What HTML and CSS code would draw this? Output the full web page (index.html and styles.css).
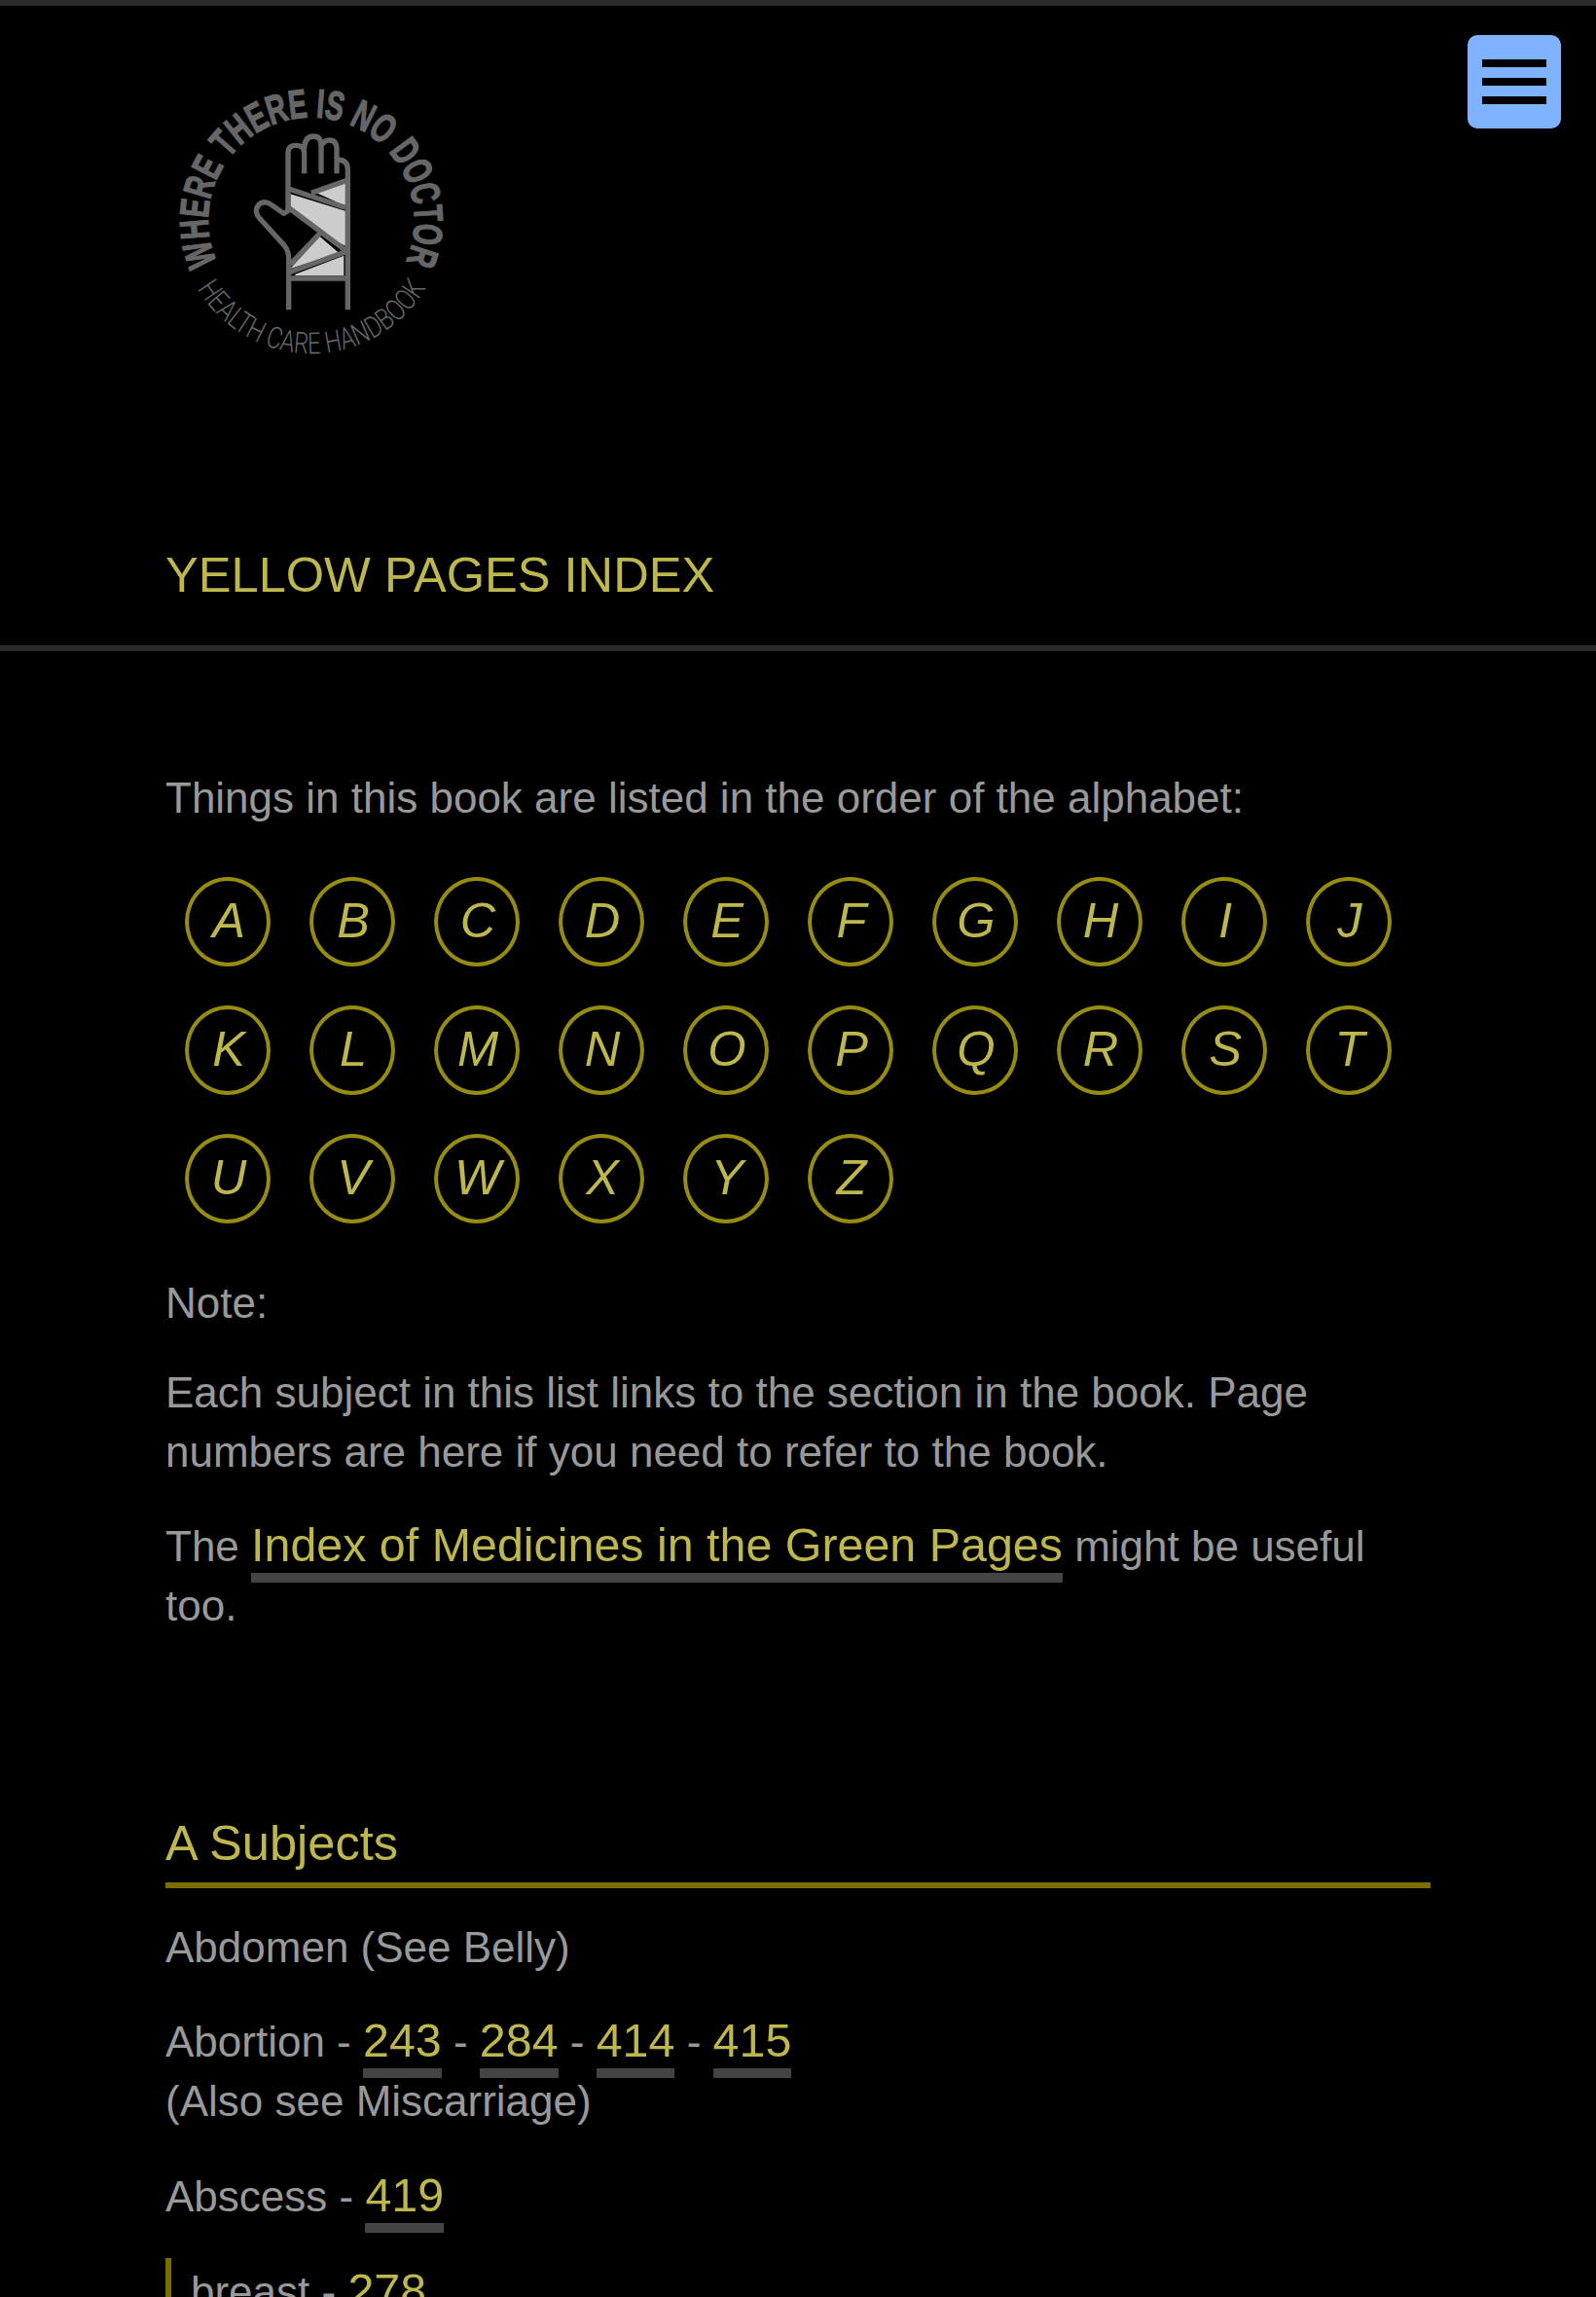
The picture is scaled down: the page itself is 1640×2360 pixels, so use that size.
FILE: index.html
```html
<!DOCTYPE html>
<html lang="en">
<head>
  <meta charset="UTF-8" />
  <title>Yellow Pages Index - Where There Is No Doctor</title>
  <meta name="viewport" content="width=device-width, initial-scale=1.0"/>
  <link rel="stylesheet" href="styles.css">
</head>
<body>
  <header class="site-header">
    <a class="logo" href="#">
      <svg class="logo-img" viewBox="0 0 960 930" role="img" aria-label="Where There Is No Doctor logo">
        <defs>
          <path id="arcTop" d="M 190 600 A 318 318 0 1 1 770 600"></path>
          <path id="arcBottom" d="M 125 675 A 410 410 0 0 0 835 675"></path>
        </defs>
        <text class="logo-title"><textPath href="#arcTop" textLength="1265" lengthAdjust="spacingAndGlyphs">WHERE THERE IS NO DOCTOR</textPath></text>
        <text class="logo-sub"><textPath href="#arcBottom" startOffset="6" textLength="850" lengthAdjust="spacingAndGlyphs">HEALTH CARE HANDBOOK</textPath></text>
        <!-- bandage -->
        <polygon class="band" points="490,382 585,350 585,425"></polygon>
        <polygon class="band" points="415,388 585,440 585,548 500,505 415,432"></polygon>
        <polygon class="band" points="415,618 505,518 565,570"></polygon>
        <polygon class="band" points="430,635 580,578 580,640 430,640"></polygon>
        <!-- hand -->
        <path class="hand" d="M410 745 V590 Q412 565 395 545 L325 468 Q305 448 312 430 Q325 405 352 418 L395 448 L415 435"></path>
        <path class="hand" d="M408 440 V262 Q408 238 432 238 Q458 238 458 262 V325 M458 250 Q458 210 487 210 Q510 210 510 240 V325 M510 240 Q520 222 535 222 Q558 222 558 250 V325 M558 282 Q592 282 592 312 V745"></path>
        <path class="hand" d="M410 372 L585 430 M480 385 L592 345 M412 432 L590 565 M415 628 L590 565 M415 605 L505 510 M410 648 H592"></path>
      </svg>
    </a>
    <button class="menu-btn" aria-label="Menu"><span></span><span></span><span></span></button>
    <h1 class="page-title">YELLOW PAGES INDEX</h1>
  </header>

  <main class="content">
    <p class="intro">Things in this book are listed in the order of the alphabet:</p>

    <nav class="alphabet">
      <a href="#a">A</a><a href="#b">B</a><a href="#c">C</a><a href="#d">D</a><a href="#e">E</a>
      <a href="#f">F</a><a href="#g">G</a><a href="#h">H</a><a href="#i">I</a><a href="#j">J</a>
      <a href="#k">K</a><a href="#l">L</a><a href="#m">M</a><a href="#n">N</a><a href="#o">O</a>
      <a href="#p">P</a><a href="#q">Q</a><a href="#r">R</a><a href="#s">S</a><a href="#t">T</a>
      <a href="#u">U</a><a href="#v">V</a><a href="#w">W</a><a href="#x">X</a><a href="#y">Y</a>
      <a href="#z">Z</a>
    </nav>

    <p>Note:</p>
    <p>Each subject in this list links to the section in the book. Page numbers are here if you need to refer to the book.</p>
    <p>The <a class="link" href="#">Index of Medicines in the Green Pages</a> might be useful too.</p>

    <h2 class="letter-head" id="a">A Subjects</h2>
    <p>Abdomen (See Belly)</p>
    <p>Abortion - <a class="link" href="#">243</a> - <a class="link" href="#">284</a> - <a class="link" href="#">414</a> - <a class="link" href="#">415</a><br>(Also see Miscarriage)</p>
    <p>Abscess - <a class="link" href="#">419</a></p>
    <p class="sub-item">breast - <a class="link" href="#">278</a></p>
  </main>
</body>
</html>
```

FILE: styles.css
```css
* {
  margin: 0;
  padding: 0;
  box-sizing: border-box;
}

html, body {
  height: 100vh;
  overflow: hidden;
}

body {
  font-family: "Liberation Sans", Arial, sans-serif;
  font-size: 44px;
  line-height: 60.5px;
  background: #000;
  color: #999;
  border-top: 6px solid #2a2a2a;
}

.site-header {
  position: relative;
  padding: 64px 170px 37px;
  border-bottom: 6px solid #2a2a2a;
}

.logo {
  display: block;
  width: 320px;
  height: 310px;
  margin-left: -10px;
}

.logo-img {
  display: block;
  width: 320px;
  height: 310px;
}

.logo-title {
  font-family: "Liberation Sans Narrow", "Liberation Sans", sans-serif;
  font-weight: 700;
  font-size: 125px;
  fill: #666;
  stroke: #666;
  stroke-width: 4;
}

.logo-sub {
  font-family: Roboto, "Liberation Sans", sans-serif;
  font-weight: 300;
  font-size: 92px;
  fill: #666;
}

.band {
  fill: #ccc;
}

.hand {
  fill: none;
  stroke: #666;
  stroke-width: 16;
  stroke-linejoin: round;
}

.menu-btn {
  position: absolute;
  top: 30px;
  right: 36px;
  display: flex;
  flex-direction: column;
  align-items: center;
  justify-content: center;
  gap: 11px;
  width: 96px;
  height: 96px;
  background: #80b3ff;
  border: none;
  border-radius: 10px;
}

.menu-btn span {
  display: block;
  width: 66px;
  height: 8px;
  background: #000;
}

.page-title {
  margin-top: 176px;
  font-size: 50.6px;
  line-height: 70px;
  font-weight: 400;
  color: #bdb74e;
}

.content {
  padding: 0 170px;
}

.content p {
  margin-bottom: 32px;
}

.content .intro {
  margin-top: 121px;
  margin-bottom: 24px;
}

.alphabet {
  display: grid;
  grid-template-columns: repeat(10, 88px);
  column-gap: 40px;
  row-gap: 40px;
  padding: 0 20px;
  margin: 50px 0 52px;
}

.alphabet a {
  display: flex;
  align-items: center;
  justify-content: center;
  height: 92px;
  padding-left: 2px;
  border: 4px solid #958c10;
  border-radius: 50%;
  font-size: 50.6px;
  font-style: italic;
  color: #bdb74e;
  text-decoration: none;
}

.link {
  font-size: 48.4px;
  line-height: 66px;
  padding-bottom: 2px;
  color: #bdb74e;
  text-decoration: none;
  border-bottom: 10px solid #444;
}

.letter-head {
  margin-top: 183px;
  margin-bottom: 31px;
  padding-bottom: 10px;
  font-size: 50.6px;
  line-height: 60px;
  font-weight: 400;
  color: #bdb74e;
  border-bottom: 6px solid #7a6e00;
}

.sub-item {
  border-left: 6px solid #7a6e00;
  padding-left: 20px;
}
```
